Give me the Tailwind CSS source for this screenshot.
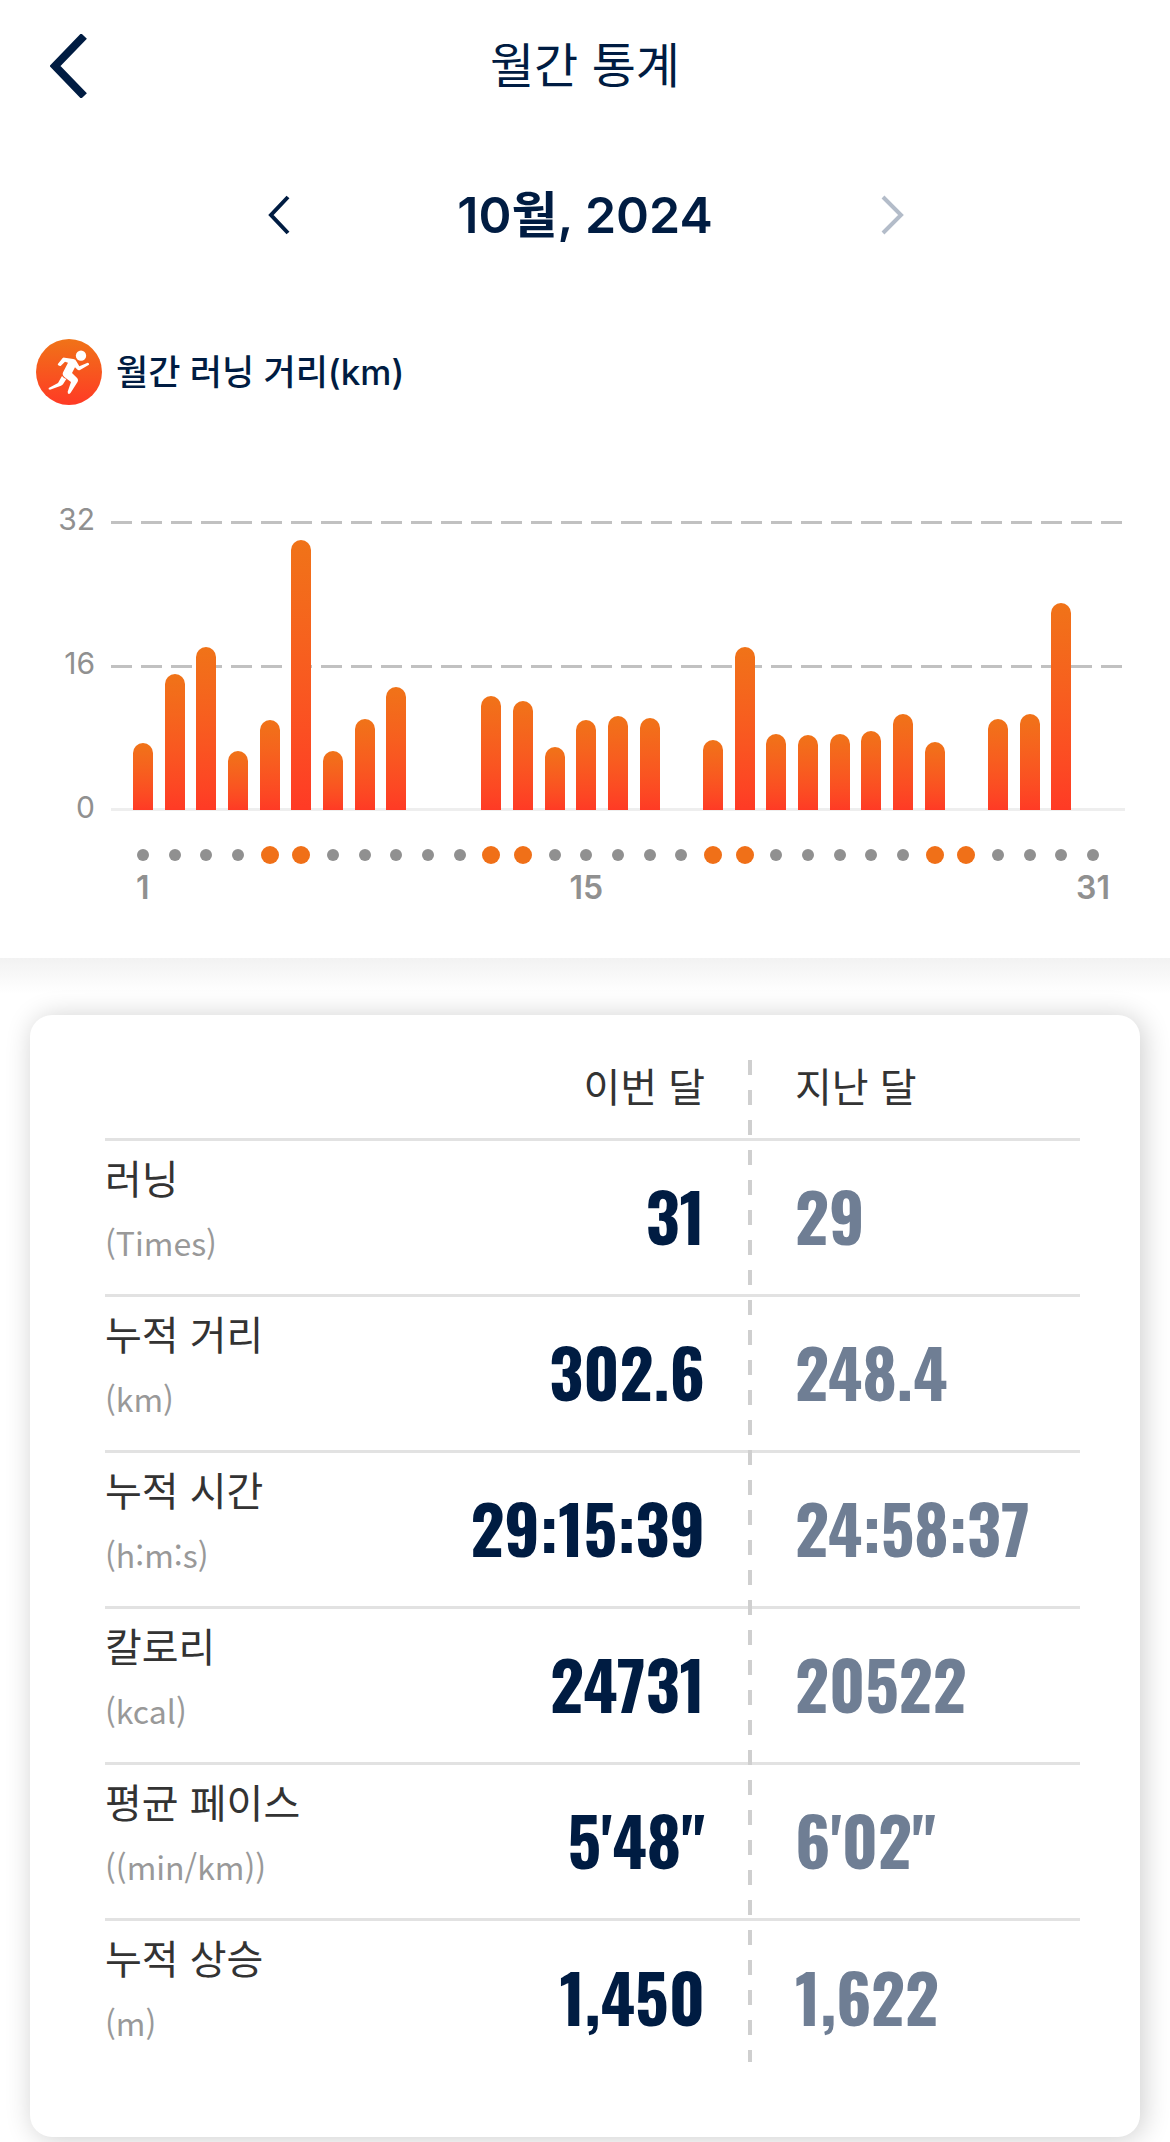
<!DOCTYPE html>
<html lang="ko">
<head>
    <meta charset="UTF-8">
    <meta name="viewport" content="width=device-width, initial-scale=1.0">
    <title>월간 통계</title>
    <script src="https://cdn.jsdelivr.net/npm/@tailwindcss/browser@4"></script>
</head>
<body class="bg-white font-['Inter','Noto_Sans_CJK_KR',sans-serif] text-[#001c42]">
    <!-- Header -->
    <header class="grid grid-cols-[1fr_auto_1fr] items-center h-[132px] px-[50px]">
        <button type="button" aria-label="뒤로" class="justify-self-start">
            <svg class="w-[38px] h-[64px]" viewBox="0 0 38 64" fill="none" stroke="currentColor" stroke-width="8"><path d="M34 2 5 32l29 30"/></svg>
        </button>
        <h1 class="pb-2 text-5xl font-['Noto_Sans_CJK_KR',sans-serif]">월간 통계</h1>
    </header>

    <!-- Month picker -->
    <nav class="flex items-center justify-between h-[166px] w-[638px] mx-auto">
        <button type="button" aria-label="이전 달">
            <svg class="w-6 h-10" viewBox="0 0 24 40" fill="none" stroke="currentColor" stroke-width="4"><path d="M22 2 5 20l17 18"/></svg>
        </button>
        <h2 class="text-[50px] font-semibold">10월, 2024</h2>
        <button type="button" aria-label="다음 달" class="text-[#b3bcc9]">
            <svg class="w-6 h-10" viewBox="0 0 24 40" fill="none" stroke="currentColor" stroke-width="4"><path d="m3 2 18 18L3 38"/></svg>
        </button>
    </nav>

    <!-- Distance chart -->
    <section class="pt-[41px] pb-[54px]">
        <div class="flex items-center gap-3.5 pl-9">
            <svg class="w-[66px] h-[66px]" viewBox="48 57 198 198">
                <defs>
                    <linearGradient id="badge" x1="0" y1="0" x2="0" y2="1">
                        <stop offset="0" stop-color="#f07318"/>
                        <stop offset="1" stop-color="#ff3a25"/>
                    </linearGradient>
                </defs>
                <circle cx="147" cy="156" r="99" fill="url(#badge)"/>
                <g fill="#fff">
                    <circle cx="183" cy="107" r="15.500"/>
                    <path d="M113 133 128 114Q130 112 134 113L160 117Q167 118 170 125L178 139 203 128Q209 129 207 134L180 150Q175 152 171 148L165 142 156 159 172 175Q176 180 173 185L152 218Q148 223 144 221L143 215 153 186 133 171Q125 163 130 155L144 128 135 125 122 138Q115 139 113 133Z"/>
                    <path d="M126 168Q132 176 139 177L129 193Q127 196 123 197L90 209Q84 209 86 204L114 189Z"/>
                </g>
            </svg>
            <h3 class="text-[35px] font-medium">월간 러닝 거리(km)</h3>
        </div>

        <div class="flex gap-4 mt-[117px] pr-[45px]">
            <div class="flex flex-col justify-between w-[95px] h-[288px] text-right text-[30px] leading-none text-[#909090]">
                <span class="-mt-[18px]">32</span>
                <span>16</span>
                <span class="-mb-3">0</span>
            </div>
            <div class="flex-1">
                <div class="relative h-[288px]">
                    <div class="absolute inset-x-0 -top-px h-[3px] bg-[repeating-linear-gradient(90deg,#c1c1c1_0_21px,transparent_21px_30px)]"></div>
                    <div class="absolute inset-x-0 top-[143px] h-[3px] bg-[repeating-linear-gradient(90deg,#c1c1c1_0_21px,transparent_21px_30px)]"></div>
                    <div class="absolute inset-x-0 -bottom-px h-[3px] bg-[#eeeeee]"></div>
                    <div id="bars" class="relative flex items-end h-full px-4"></div>
                </div>
                <div id="days" class="flex px-4 pt-9"></div>
            </div>
        </div>
    </section>

    <!-- Comparison table -->
    <section class="px-[30px] pt-[57px] pb-1.5 bg-[linear-gradient(#f2f2f2,#ffffff_36px)] overflow-hidden">
        <div class="bg-white rounded-[22px] shadow-[3px_2px_28px_rgba(0,0,0,0.2)] pt-[45px] pb-[60px] pl-[75px] pr-[60px]">
            <div class="relative">
                <table class="w-full border-separate border-spacing-0 font-['Noto_Sans_CJK_KR',sans-serif] text-[40px] text-[#333333]">
                    <thead>
                        <tr class="leading-[50px]">
                            <td class="border-b-3 border-[#e2e2e2]"></td>
                            <th scope="col" class="border-b-3 border-[#e2e2e2] pb-7 pr-[45px] text-right font-normal">이번 달</th>
                            <th scope="col" class="border-b-3 border-[#e2e2e2] pb-7 pl-[45px] w-[330px] text-left font-normal">지난 달</th>
                        </tr>
                    </thead>
                    <tbody id="stats"></tbody>
                </table>
                <div class="absolute top-0 bottom-[15px] right-[328px] w-1 bg-[repeating-linear-gradient(#cfcfcf_0_15px,transparent_15px_30px)]"></div>
            </div>
        </div>
    </section>

    <script>
        const MAX_KM = 32;
        const distances = [7.5, 15.1, 18.1, 6.6, 10, 30, 6.6, 10.1, 13.7, 0, 0, 12.7, 12.1, 7, 10, 10.4,
            10.2, 0, 7.8, 18.1, 8.4, 8.3, 8.5, 8.8, 10.7, 7.6, 0, 10.1, 10.7, 23, 0];
        const weekend = [5, 6, 12, 13, 19, 20, 26, 27];
        const labelled = [1, 15, 31];

        // Bars
        document.getElementById('bars').innerHTML = distances.map(km => `
            <div class="flex flex-1 items-end justify-center h-full">
                <div class="w-5 rounded-t-[10px] bg-linear-to-b from-[#f07318] to-[#ff3a25]" style="height: ${km / MAX_KM * 100}%"></div>
            </div>`).join('');

        // Day dots with the first, middle and last day labelled
        document.getElementById('days').innerHTML = distances.map((km, i) => {
            const day = i + 1;
            const dot = weekend.includes(day) ? 'size-[18px] bg-[#f07018]' : 'size-3 bg-[#909090]';
            return `
            <div class="flex flex-1 w-0 flex-col items-center">
                <div class="flex items-center h-[18px]"><div class="rounded-full ${dot}"></div></div>
                <span class="mt-2 h-8 text-[32px] leading-none font-semibold text-[#909090]">${labelled.includes(day) ? day : ''}</span>
            </div>`;
        }).join('');

        // Table rows
        const stats = [
            { name: '러닝', unit: '(Times)', now: '31', last: '29' },
            { name: '누적 거리', unit: '(km)', now: '302.6', last: '248.4' },
            { name: '누적 시간', unit: '(h:m:s)', now: '29:15:39', last: '24:58:37' },
            { name: '칼로리', unit: '(kcal)', now: '24731', last: '20522' },
            { name: '평균 페이스', unit: '((min/km))', now: '5\'48"', last: '6\'02"' },
            { name: '누적 상승', unit: '(m)', now: '1,450', last: '1,622' },
        ];
        document.getElementById('stats').innerHTML = stats.map((row, i) => {
            const line = i < stats.length - 1 ? 'border-b-3 border-[#e2e2e2]' : '';
            return `
            <tr class="h-[156px]">
                <th scope="row" class="${line} pt-1 align-top text-left font-normal leading-[64px]">
                    ${row.name}
                    <span class="block text-[32px] leading-[66px] text-[#999999]">${row.unit}</span>
                </th>
                <td class="${line} pb-1.5 pr-[45px] text-right text-[66px] leading-none font-bold font-['Oswald',sans-serif] text-[#001c42]">${row.now}</td>
                <td class="${line} pb-1.5 pl-[45px] text-[66px] leading-none font-bold font-['Oswald',sans-serif] text-[#6f7e94]">${row.last}</td>
            </tr>`;
        }).join('');
    </script>
</body>
</html>
